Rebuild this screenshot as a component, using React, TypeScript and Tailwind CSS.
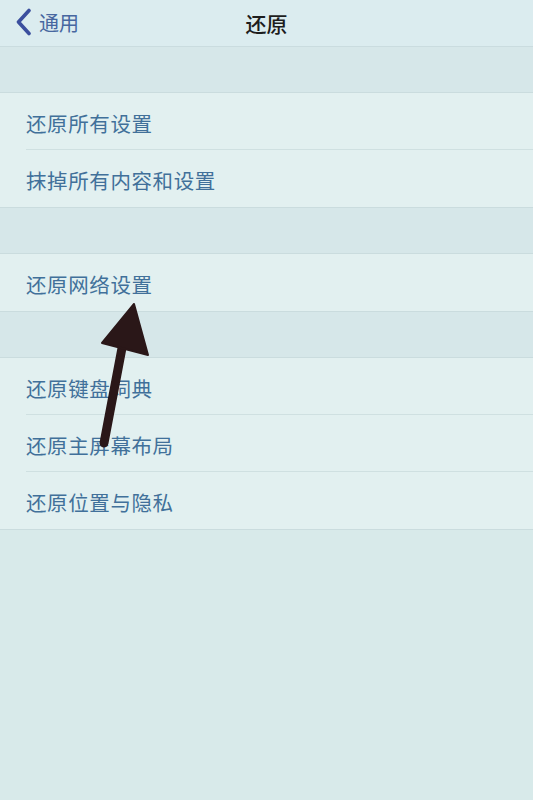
import React from "react";

const font = { fontFamily: '"Noto Sans CJK SC", "Noto Sans", sans-serif' };

function Row({ label, last }: { label: string; last?: boolean }) {
  return (
    <div className="relative h-[57px] flex items-center pl-[26px] pt-[3px] bg-[#e2f0f0]">
      <span className="text-[20.5px] text-[#41709a] leading-none tracking-[0.6px]">{label}</span>
      {!last && <div className="absolute left-[26px] right-0 bottom-0 h-px bg-[#cfe0e1]" />}
    </div>
  );
}

function Group({ items }: { items: string[] }) {
  return (
    <div className="border-y border-[#cadcde]">
      {items.map((t, i) => (
        <Row key={t} label={t} last={i === items.length - 1} />
      ))}
    </div>
  );
}

export default function App() {
  return (
    <div className="relative w-[533px] h-[800px] overflow-hidden bg-[#d8eaea]" style={font}>
      <div className="h-[47px] bg-[#dbecef] border-b border-[#cadcdf] flex items-center relative">
        <div className="flex items-center pl-[15px]">
          <svg width="17" height="28" viewBox="0 0 17 28" className="mr-[7px] -mt-[2px]">
            <path d="M14 2.5 L3.5 14 L14 25.5" fill="none" stroke="#3b4f9e" strokeWidth="3.6" strokeLinecap="round" strokeLinejoin="round" />
          </svg>
          <span className="text-[20px] text-[#4767a0] leading-none">通用</span>
        </div>
        <div className="absolute inset-x-0 top-0 h-full flex items-center justify-center">
          <span className="text-[21px] font-medium text-[#1d1d1d] leading-none">还原</span>
        </div>
      </div>
      <div className="h-[45px] bg-[#d6e7e9]" />
      <Group items={["还原所有设置", "抹掉所有内容和设置"]} />
      <div className="h-[45px] bg-[#d6e7e9]" />
      <Group items={["还原网络设置"]} />
      <div className="h-[45px] bg-[#d6e7e9]" />
      <Group items={["还原键盘词典", "还原主屏幕布局", "还原位置与隐私"]} />
      <svg className="absolute left-0 top-0 pointer-events-none" width="533" height="800" viewBox="0 0 533 800">
        <line x1="122" y1="348" x2="104" y2="443" stroke="#2a1718" strokeWidth="9" strokeLinecap="round" />
        <polygon points="134,304 102,343 148,355" fill="#2a1718" stroke="#2a1718" strokeWidth="2" strokeLinejoin="round" />
      </svg>
    </div>
  );
}
